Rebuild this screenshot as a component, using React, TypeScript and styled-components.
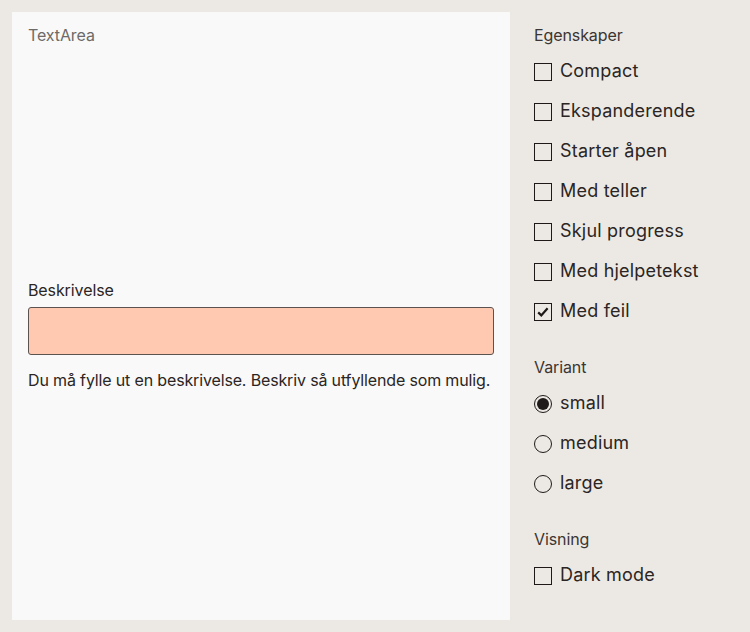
import React from "react";
import styled, { createGlobalStyle } from "styled-components";

const Global = createGlobalStyle`
  html, body { margin: 0; padding: 0; background: #ece9e4; }
  body { font-family: Inter, "Noto Sans", sans-serif; color: #2b2523; }
`;

const Page = styled.div`
  display: flex;
  gap: 24px;
  padding: 12px 0 12px 12px;
  height: 632px;
  box-sizing: border-box;
`;

const Preview = styled.div`
  width: 498px;
  background: #f9f9f9;
  box-sizing: border-box;
  padding: 12px 16px 0;
  display: flex;
  flex-direction: column;
`;

const PreviewTitle = styled.div`
  font-size: 16px;
  line-height: 22px;
  color: #6d6a68;
  letter-spacing: -0.1px;
`;

const Stage = styled.div`
  flex: 1;
  display: flex;
  flex-direction: column;
  justify-content: center;
  padding-top: 4px;
`;

const FieldLabel = styled.label`
  font-size: 16px;
  line-height: 22px;
  color: #2b2523;
  letter-spacing: -0.1px;
  margin-bottom: 6px;
`;

const Field = styled.textarea`
  display: block;
  width: 466px;
  height: 48px;
  box-sizing: border-box;
  background: #ffc8b0;
  border: 1px solid #5a5350;
  border-radius: 3px;
  resize: none;
  font: inherit;
  margin: 0;
`;

const HelpText = styled.div`
  margin-top: 14px;
  font-size: 16px;
  line-height: 22px;
  color: #2b2523;
  letter-spacing: -0.15px;
  white-space: nowrap;
`;

const Controls = styled.div`
  display: flex;
  flex-direction: column;
  padding-top: 12px;
`;

const Group = styled.div<{ $gap?: number }>`
  display: flex;
  flex-direction: column;
  margin-bottom: ${(p) => p.$gap ?? 16}px;
`;

const GroupTitle = styled.div`
  font-size: 16px;
  line-height: 22px;
  color: #3b3533;
  letter-spacing: -0.1px;
  margin-bottom: 4px;
`;

const Option = styled.div`
  display: flex;
  align-items: center;
  gap: 8px;
  height: 40px;
  font-size: 18px;
  letter-spacing: 0.2px;
  color: #2b2523;
`;

const Box = styled.span`
  width: 18px;
  height: 18px;
  box-sizing: border-box;
  border: 1.5px solid #1f1a19;
  display: flex;
  align-items: center;
  justify-content: center;
  margin-top: 3px;
`;

const Radio = styled.span<{ $on?: boolean }>`
  width: 18px;
  height: 18px;
  box-sizing: border-box;
  border-radius: 50%;
  border: 1.5px solid #1f1a19;
  display: flex;
  align-items: center;
  justify-content: center;
  margin-top: 3px;
  &::after {
    content: "";
    display: ${(p) => (p.$on ? "block" : "none")};
    width: 12px;
    height: 12px;
    border-radius: 50%;
    background: #1f1a19;
  }
`;

const Check = () => (
  <svg width="14" height="14" viewBox="0 0 14 14">
    <path d="M2.2 7.4 L5.3 10.4 L11.6 3.2" fill="none" stroke="#1f1a19" strokeWidth="2.2" />
  </svg>
);

const props = [
  { l: "Compact", on: false },
  { l: "Ekspanderende", on: false },
  { l: "Starter åpen", on: false },
  { l: "Med teller", on: false },
  { l: "Skjul progress", on: false },
  { l: "Med hjelpetekst", on: false },
  { l: "Med feil", on: true },
];

export default function App() {
  return (
    <>
      <Global />
      <Page>
        <Preview>
          <PreviewTitle>TextArea</PreviewTitle>
          <Stage>
            <FieldLabel>Beskrivelse</FieldLabel>
            <Field />
            <HelpText>Du må fylle ut en beskrivelse. Beskriv så utfyllende som mulig.</HelpText>
          </Stage>
        </Preview>
        <Controls>
          <Group $gap={26}>
            <GroupTitle>Egenskaper</GroupTitle>
            {props.map((p) => (
              <Option key={p.l}>
                <Box>{p.on && <Check />}</Box>
                {p.l}
              </Option>
            ))}
          </Group>
          <Group $gap={26}>
            <GroupTitle>Variant</GroupTitle>
            {["small", "medium", "large"].map((v, i) => (
              <Option key={v}>
                <Radio $on={i === 0} />
                {v}
              </Option>
            ))}
          </Group>
          <Group>
            <GroupTitle>Visning</GroupTitle>
            <Option>
              <Box />
              Dark mode
            </Option>
          </Group>
        </Controls>
      </Page>
    </>
  );
}
